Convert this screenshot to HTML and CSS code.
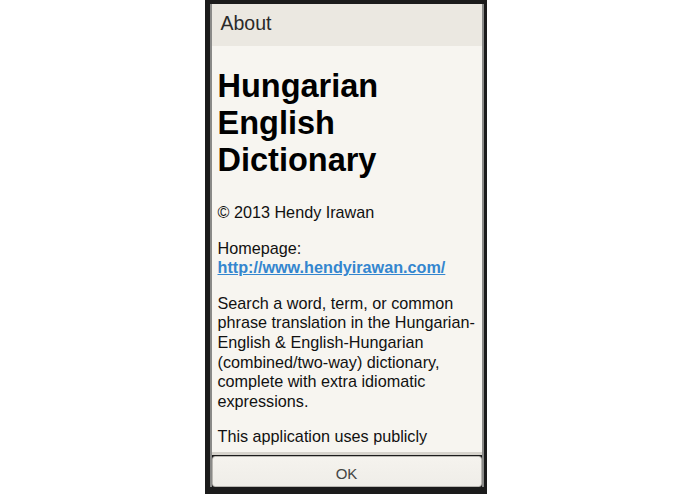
FILE: index.html
```html
<!DOCTYPE html>
<html lang="en">
<head>
    <meta charset="UTF-8">
    <meta name="viewport" content="width=device-width, initial-scale=1.0">
    <title>About</title>
<link rel="stylesheet" href="styles.css">
</head>
<body>
    <div class="phone">
        <div class="dialog">
            <div class="dialog-title">About</div>
            <div class="dialog-body">
                <h1>Hungarian English Dictionary</h1>
                <p>&copy; 2013 Hendy Irawan</p>
                <p>Homepage:<br><a href="#">http://www.hendyirawan.com/</a></p>
                <p>Search a word, term, or common<br>phrase translation in the Hungarian-<br>English &amp; English-Hungarian<br>(combined/two-way) dictionary,<br>complete with extra idiomatic<br>expressions.</p>
                <p>This application uses publicly</p>
            </div>
            <div class="dialog-buttons">
                <button class="ok-button">OK</button>
            </div>
        </div>
    </div>
</body>
</html>
```

FILE: styles.css
```css
body {
    margin: 0;
    background: #ffffff;
    font-family: "Liberation Sans", Arial, sans-serif;
    display: flex;
    justify-content: center;
    height: 494px;
    overflow: hidden;
}

.phone {
    width: 274px;
    height: 490px;
    background: #1b1b1b;
    padding: 4px 3px 0 5px;
    margin-left: -4px;
}

.dialog {
    height: 483px;
    border-left: 2px solid #8a8a88;
    border-right: 2px solid #8a8a88;
    display: flex;
    flex-direction: column;
    background: #f7f5f0;
}

.dialog-title {
    height: 42px;
    line-height: 39px;
    padding-left: 9px;
    font-size: 19.5px;
    color: #2a2a2a;
    background: #ebe8e1;
}

.dialog-body {
    position: relative;
    flex: 1;
    overflow: hidden;
    padding: 22px 2px 0 6px;
    color: #111111;
    white-space: nowrap;
}

/* fading edge above the button bar */
.dialog-body::after {
    content: "";
    position: absolute;
    left: 0;
    right: 0;
    bottom: 0;
    height: 9px;
    background: linear-gradient(rgba(247, 245, 240, 0), #f7f5f0 80%);
}

.dialog-body h1 {
    margin: 0 0 24px;
    font-size: 32.5px;
    line-height: 37px;
    font-weight: bold;
    color: #000000;
    white-space: normal;
}

.dialog-body p {
    margin: 0 0 16px;
    font-size: 16.2px;
    line-height: 19.6px;
}

.dialog-body a {
    color: #3486cf;
    font-weight: bold;
}

.dialog-buttons {
    border-top: 3px solid #d6d3cc;
    padding-top: 1px;
    background: #1b1b1b;
}

.ok-button {
    display: block;
    width: 100%;
    height: 31px;
    margin: 0;
    padding: 3px 0 0;
    border: 1px solid #b9b7b2;
    border-radius: 3px;
    background: linear-gradient(#f5f3ee, #efede8);
    color: #444444;
    font-family: "Liberation Sans", Arial, sans-serif;
    font-size: 15px;
}
```
